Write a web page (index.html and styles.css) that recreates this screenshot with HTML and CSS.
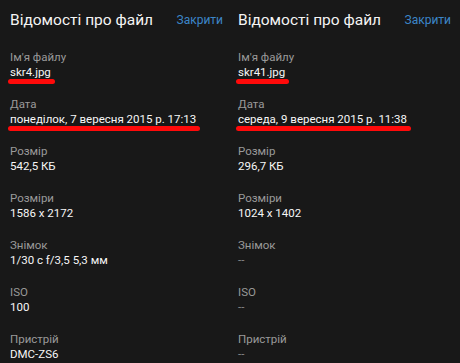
FILE: index.html
```html
<!DOCTYPE html>
<html lang="uk">
<head>
<meta charset="utf-8">
<link rel="stylesheet" href="styles.css">
</head>
<body>
<div class="screen">
  <section class="panel">
    <header class="head">
      <h1 class="title">Відомості про файл</h1>
      <a class="close">Закрити</a>
    </header>
    <div class="field"><div class="label">Ім'я файлу</div><div class="value"><span class="marked">skr4.jpg</span></div></div>
    <div class="field"><div class="label">Дата</div><div class="value"><span class="marked">понеділок, 7 вересня 2015 р. 17:13</span></div></div>
    <div class="field"><div class="label">Розмір</div><div class="value">542,5 КБ</div></div>
    <div class="field"><div class="label">Розміри</div><div class="value">1586 x 2172</div></div>
    <div class="field"><div class="label">Знімок</div><div class="value">1/30 c f/3,5 5,3 мм</div></div>
    <div class="field"><div class="label">ISO</div><div class="value">100</div></div>
    <div class="field"><div class="label">Пристрій</div><div class="value">DMC-ZS6</div></div>
  </section>
  <section class="panel panel-right">
    <header class="head">
      <h1 class="title">Відомості про файл</h1>
      <a class="close">Закрити</a>
    </header>
    <div class="field"><div class="label">Ім'я файлу</div><div class="value"><span class="marked">skr41.jpg</span></div></div>
    <div class="field"><div class="label">Дата</div><div class="value"><span class="marked">середа, 9 вересня 2015 р. 11:38</span></div></div>
    <div class="field"><div class="label">Розмір</div><div class="value">296,7 КБ</div></div>
    <div class="field"><div class="label">Розміри</div><div class="value">1024 x 1402</div></div>
    <div class="field"><div class="label">Знімок</div><div class="value dim">--</div></div>
    <div class="field"><div class="label">ISO</div><div class="value dim">--</div></div>
    <div class="field"><div class="label">Пристрій</div><div class="value dim">--</div></div>
  </section>
</div>
</body>
</html>
```
FILE: styles.css
```css
html, body {
  margin: 0;
  padding: 0;
  background: #181818;
}
body {
  font-family: Roboto, "Liberation Sans", sans-serif;
  color: #f2f2f2;
}
.screen {
  display: grid;
  grid-template-columns: 228px 232px;
  width: 460px;
  height: 363px;
  overflow: hidden;
  background: #181818;
}
.panel {
  display: flex;
  flex-direction: column;
  gap: 17px;
  padding: 8px 5px 0 10px;
}
.panel-right {
  padding-right: 9px;
}
.head {
  display: flex;
  justify-content: space-between;
  align-items: center;
  height: 24px;
  margin-bottom: 1px;
}
.title {
  margin: 0;
  font-size: 15.5px;
  font-weight: 400;
  line-height: 24px;
  white-space: nowrap;
  color: #f4f4f4;
}
.close {
  font-size: 12px;
  line-height: 15px;
  white-space: nowrap;
  color: #3c86c8;
  margin-top: 1px;
}
.field {
  display: flex;
  flex-direction: column;
}
.label, .value {
  font-size: 11.5px;
  line-height: 15px;
  white-space: nowrap;
}
.label {
  color: #9a9a9a;
}
.value {
  color: #f6f6f6;
}
.value.dim {
  color: #8a8a8a;
}
.marked {
  position: relative;
}
.marked::after {
  content: "";
  position: absolute;
  left: -2px;
  right: -4px;
  bottom: -5px;
  height: 5px;
  border-radius: 3px;
  background: #ff0a0a;
}
```
